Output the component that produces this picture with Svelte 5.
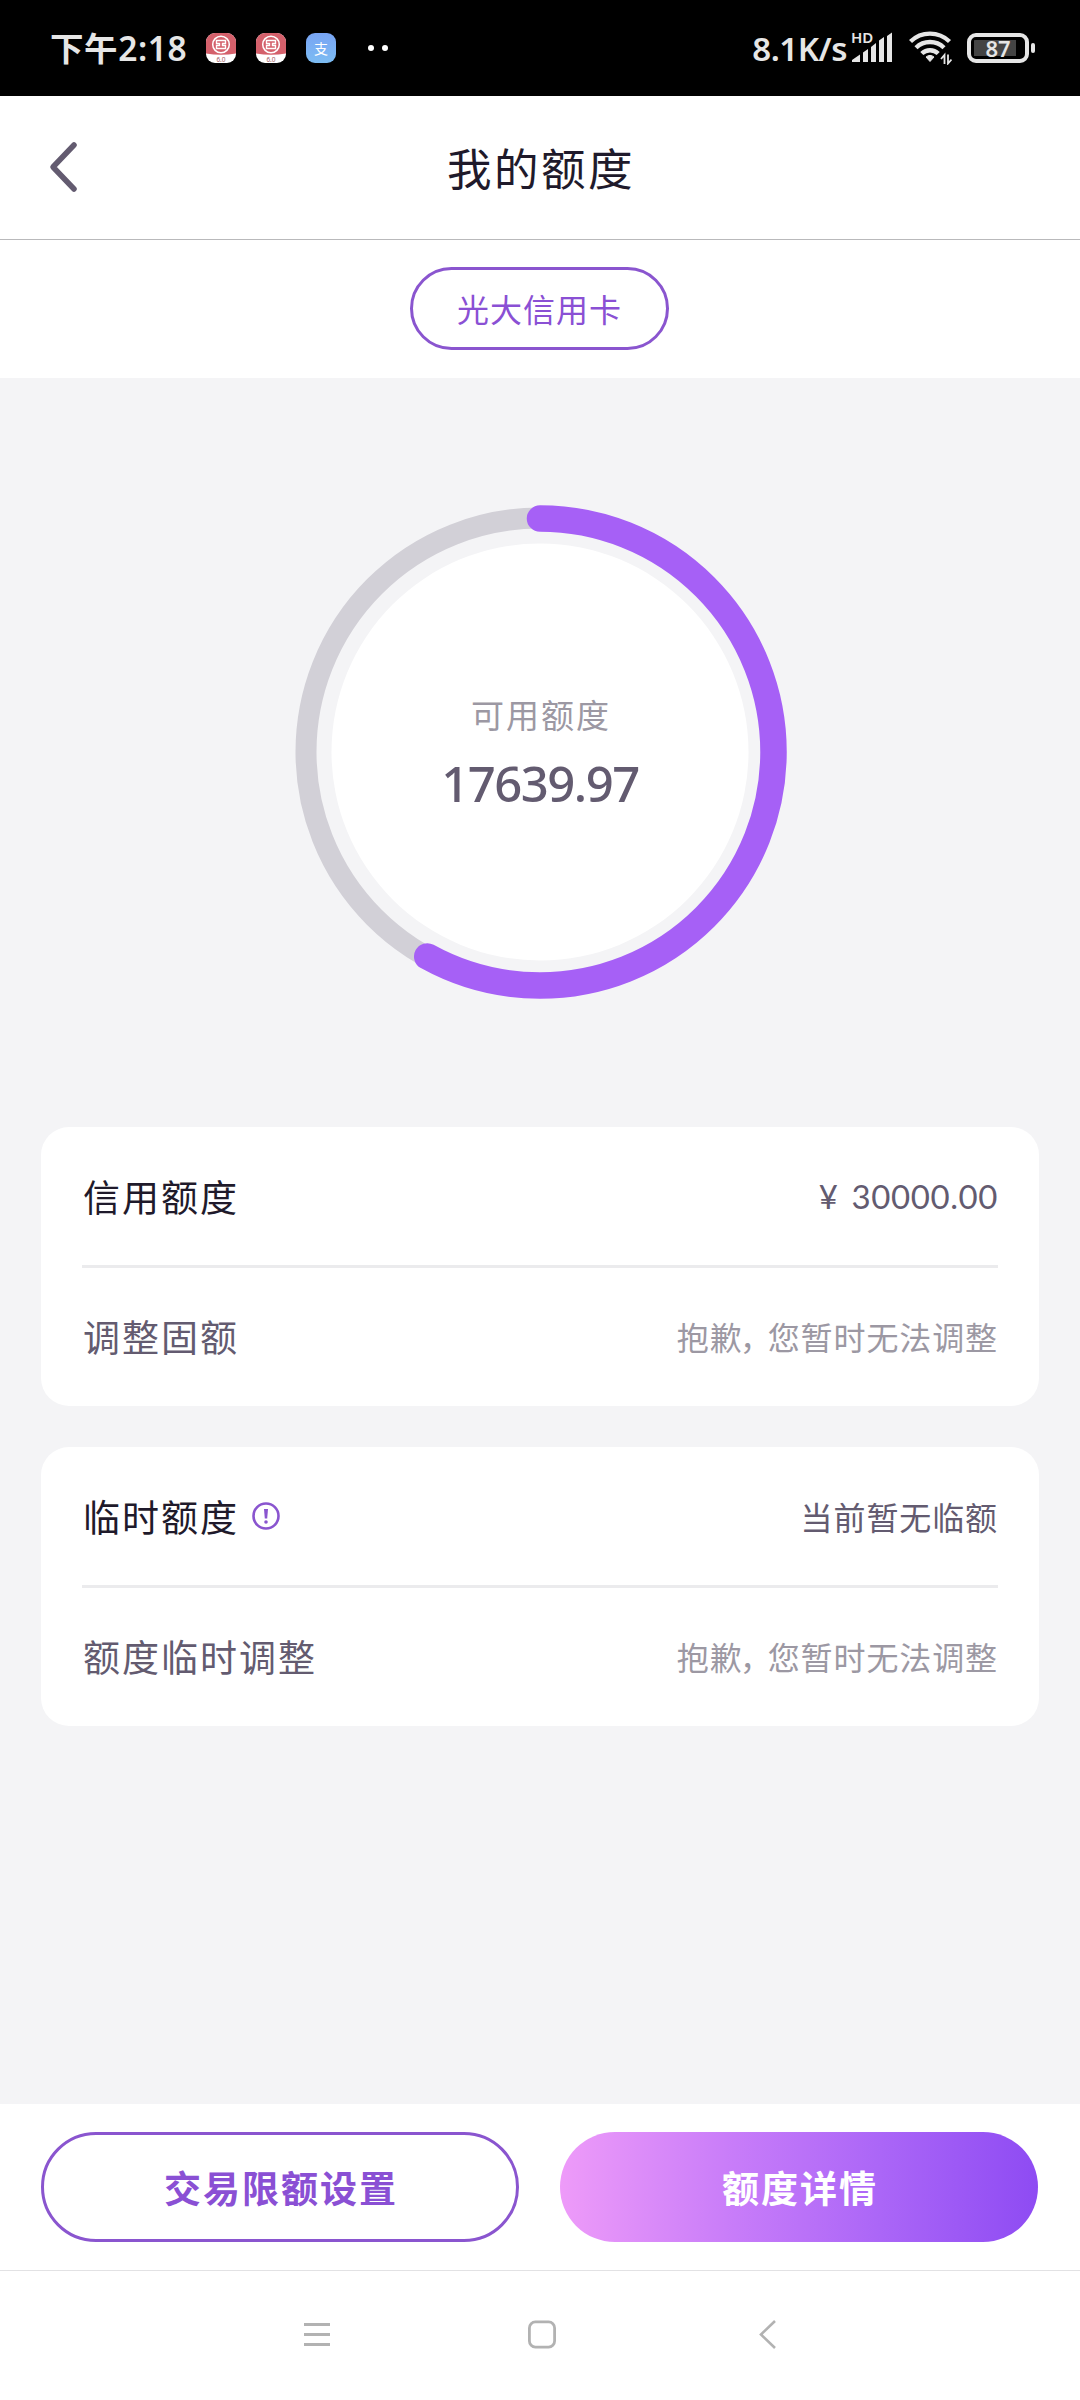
<script lang="ts">
  interface Row {
    label: string;
    value: string;
    primary?: boolean;
    info?: boolean;
    muted?: boolean;
  }

  const total = 30000;
  const available = 17639.97;
  const progress = 0.58;
  const radius = 233.5;
  const circumference = 2 * Math.PI * radius;

  const groups: Row[][] = [
    [
      { label: '信用额度', value: `¥ ${total.toFixed(2)}`, primary: true },
      { label: '调整固额', value: '抱歉，您暂时无法调整', muted: true },
    ],
    [
      { label: '临时额度', value: '当前暂无临额', primary: true, info: true },
      { label: '额度临时调整', value: '抱歉，您暂时无法调整', muted: true },
    ],
  ];
</script>

{#snippet bankIcon()}
  <svg class="app-icon" viewBox="0 0 30 30">
    <rect width="30" height="30" rx="9" fill="#fff" />
    <path d="M0 20.500V9a9 9 0 0 1 9-9h12a9 9 0 0 1 9 9v11.500Q15 23 0 20.500z" fill="#d4606b" />
    <circle cx="15" cy="11.500" r="8.300" fill="none" stroke="#fff" stroke-width="1.500" />
    <path
      d="M10.500 7.500h9v3h-3v2h3v3h-9v-3h3v-2h-3z"
      fill="none"
      stroke="#fff"
      stroke-width="1.400"
    />
    <text x="15" y="28.500" text-anchor="middle" font-size="6.500" fill="#a05a60">6.0</text>
  </svg>
{/snippet}

<div class="screen">
  <div class="status-bar">
    <span class="time">下午2:18</span>
    <div class="app-icons">
      {@render bankIcon()}
      {@render bankIcon()}
      <span class="app-icon pay">支</span>
    </div>
    <span class="dots"><i></i><i></i></span>
    <div class="status-right">
      <span class="speed">8.1K/s</span>
      <svg class="signal" width="43" height="56" viewBox="0 -10 43 56" fill="#e6e6e6">
        <text x="0" y="13" font-size="15" font-weight="600">HD</text>
        <path d="M1 32v-2l8-5.500v7.500zM12 22.500l5-3.500v13h-5zM20 17l5-4v19h-5zM28 10.500l5-3.500v25h-5zM36 6l5-3.500v29.500h-5z" />
      </svg>
      <svg class="wifi" width="43" height="34" viewBox="0 0 43 34">
        <g fill="none" stroke="#e6e6e6" stroke-width="4.400">
          <path d="M1.500 10.500a28 28 0 0 1 39 0" />
          <path d="M7 16.700a20 20 0 0 1 28 0" />
          <path d="M12.800 22.500a11.800 11.800 0 0 1 16.400 0" />
        </g>
        <path d="M17 26q4-3.200 8 0l-4 4.500z" fill="#e6e6e6" stroke="#e6e6e6" stroke-linejoin="round" />
        <path d="M35.500 33v-9l-3.500 4M39 23.500v9l3.500-4" fill="none" stroke="#e6e6e6" stroke-width="1.800" />
      </svg>
      <div class="battery"><span>87</span></div>
    </div>
  </div>

  <header>
    <svg class="back" width="32" height="54" viewBox="0 0 32 54">
      <path d="M27 5L6 27l21 22" fill="none" stroke="#635b70" stroke-width="5.500" stroke-linecap="round" stroke-linejoin="round" />
    </svg>
    <h1>我的额度</h1>
  </header>

  <div class="tabs">
    <button class="chip">光大信用卡</button>
  </div>

  <main>
    <div class="gauge">
      <svg width="494" height="494" viewBox="0 0 494 494" fill="none">
        <circle cx="247" cy="247" r="234" stroke="#d2d0d7" stroke-width="21" />
        <circle cx="247" cy="247" r="208.500" fill="#fff" />
        <circle
          cx="247"
          cy="247"
          r={radius}
          stroke="#a660f6"
          stroke-width="26.500"
          stroke-linecap="round"
          stroke-dasharray="{circumference * progress} {circumference}"
          transform="rotate(-90 247 247)"
        />
      </svg>
      <div class="gauge-text">
        <span class="gauge-label">可用额度</span>
        <span class="gauge-value">{available}</span>
      </div>
    </div>

    {#each groups as rows}
      <section class="card">
        {#each rows as row}
          <div class="row">
            <span class="label" class:primary={row.primary}>{row.label}</span>
            {#if row.info}
              <svg class="info" width="28" height="28" viewBox="0 0 28 28">
                <circle cx="14" cy="14" r="12.500" fill="none" stroke="#8a55cf" stroke-width="2.600" />
                <path d="M12 7h4l-.8 9.500h-2.400z" fill="#8a55cf" />
                <circle cx="14" cy="20" r="1.800" fill="#8a55cf" />
              </svg>
            {/if}
            <span class="value" class:muted={row.muted} class:amount={row.value.startsWith('¥')}>
              {#each row.value.split('，') as part, i}{#if i > 0}<span class="comma">，</span>{/if}{part}{/each}
            </span>
          </div>
        {/each}
      </section>
    {/each}
  </main>

  <footer>
    <button class="outline">交易限额设置</button>
    <button class="filled">额度详情</button>
  </footer>

  <nav>
    <svg width="30" height="30" viewBox="0 0 30 30" fill="none" stroke="#b2b2b2" stroke-width="2.800">
      <path d="M2 4.500h26M2 14.500h26M2 24.500h26" />
    </svg>
    <svg width="30" height="30" viewBox="0 0 30 30" fill="none" stroke="#b2b2b2" stroke-width="2.800">
      <rect x="2.400" y="1.900" width="25.200" height="25.200" rx="6" />
    </svg>
    <svg width="30" height="30" viewBox="0 0 30 30" fill="none" stroke="#b2b2b2" stroke-width="2.600">
      <path d="M23 1L9 14.500 23 28" />
    </svg>
  </nav>
</div>

<style>
  :global(body) {
    background: #fff;
  }

  .screen {
    display: flex;
    flex-direction: column;
    width: 1080px;
    height: 2400px;
    background: #f4f4f6;
    font-family: 'Noto Sans', 'Noto Sans CJK SC', sans-serif;
    overflow: hidden;
  }

  button {
    font-family: inherit;
    box-sizing: border-box;
    padding: 0;
    white-space: nowrap;
  }

  .status-bar {
    display: flex;
    align-items: center;
    height: 96px;
    box-sizing: border-box;
    padding: 0 45px 0 50px;
    background: #000;
    color: #e6e6e6;
    flex-shrink: 0;
  }

  .time {
    width: 156px;
    padding-bottom: 3px;
    font-size: 33.5px;
    font-weight: 600;
    letter-spacing: 0.6px;
    white-space: nowrap;
  }

  .app-icons {
    display: flex;
    gap: 20px;
  }

  .app-icon {
    width: 30px;
    height: 30px;
  }

  .pay {
    display: flex;
    align-items: center;
    justify-content: center;
    border-radius: 9px;
    background: linear-gradient(#78a4f4, #7cbcf2);
    color: #fff;
    font-size: 14px;
  }

  .dots {
    display: flex;
    gap: 8px;
    margin-left: 32px;
  }

  .dots i {
    width: 6px;
    height: 6px;
    border-radius: 50%;
    background: #fff;
  }

  .status-right {
    display: flex;
    align-items: center;
    margin-left: auto;
  }

  .speed {
    font-size: 33px;
    font-weight: 600;
    letter-spacing: -0.5px;
    margin-right: 4px;
  }

  .signal {
    margin-right: 15px;
  }

  .wifi {
    margin-right: 15px;
  }

  .battery {
    position: relative;
    width: 62px;
    height: 30px;
    box-sizing: border-box;
    border: 4px solid #e6e6e6;
    border-radius: 9px;
    display: flex;
    align-items: center;
    justify-content: center;
    margin-right: 6px;
    font-size: 22px;
    font-weight: 600;
    background: linear-gradient(90deg, transparent 3px, #444 3px 45px, transparent 45px) content-box;
    padding: 3px 0;
    line-height: 1;
  }

  .battery::after {
    content: '';
    position: absolute;
    right: -10px;
    top: 6px;
    width: 4px;
    height: 10px;
    border-radius: 2px;
    background: #e6e6e6;
  }

  header {
    display: grid;
    grid-template-columns: 120px 1fr 120px;
    align-items: center;
    height: 144px;
    box-sizing: border-box;
    padding-bottom: 2px;
    border-bottom: 1px solid #b9b9bb;
    background: #fff;
    flex-shrink: 0;
  }

  .back {
    margin-left: 47px;
  }

  h1 {
    margin: 0;
    text-align: center;
    color: #1f1a2b;
    font-size: 44.5px;
    font-weight: 400;
    letter-spacing: 2.5px;
    text-indent: 2px;
  }

  .tabs {
    display: flex;
    justify-content: center;
    align-items: center;
    height: 138px;
    box-sizing: border-box;
    padding: 0 1px 2px 0;
    background: #fff;
    flex-shrink: 0;
  }

  .chip {
    width: 259px;
    height: 83px;
    border: 3px solid #8a55cf;
    border-radius: 42px;
    background: none;
    color: #8a50d4;
    font-size: 32px;
    letter-spacing: 1px;
  }

  main {
    flex: 1;
    display: flex;
    flex-direction: column;
    padding: 127px 41px 0;
  }

  .gauge {
    display: grid;
    place-items: center;
    height: 494px;
    margin-bottom: 128px;
  }

  .gauge > * {
    grid-area: 1 / 1;
  }

  .gauge-text {
    display: flex;
    flex-direction: column;
    align-items: center;
    padding-top: 12px;
  }

  .gauge-label {
    color: #9c98a3;
    font-size: 33px;
    line-height: 50px;
    letter-spacing: 2px;
    text-indent: 2px;
  }

  .gauge-value {
    color: #635b70;
    font-size: 49px;
    font-weight: 500;
    line-height: 84px;
    letter-spacing: -1.5px;
  }

  .card {
    box-sizing: border-box;
    height: 279px;
    padding: 0 41px;
    margin-bottom: 41px;
    border-radius: 28px;
    background: #fff;
    display: grid;
    grid-template-rows: 138px 141px;
  }

  .row {
    display: flex;
    align-items: center;
  }

  .row + .row {
    padding-bottom: 3px;
    border-top: 3px solid #ebebed;
  }

  .label {
    margin-left: 1px;
    color: #635b70;
    font-size: 37px;
    letter-spacing: 2px;
  }

  .label.primary {
    color: #1f1a2b;
  }

  .info {
    margin-left: 13px;
  }

  .value {
    margin-left: auto;
    color: #635b70;
    font-size: 32px;
    letter-spacing: 0.9px;
  }

  .value.muted {
    color: #9c98a3;
  }

  .value.amount {
    font-family: Lato, 'Noto Sans CJK SC', sans-serif;
    font-size: 33px;
    letter-spacing: 0.6px;
    word-spacing: 4px;
  }

  .comma {
    margin-left: -3px;
    letter-spacing: -4px;
  }

  footer {
    display: grid;
    grid-template-columns: 1fr 1fr;
    gap: 41px;
    align-items: center;
    height: 166px;
    padding: 0 42px 0 41px;
    background: #fff;
    flex-shrink: 0;
  }

  footer button {
    height: 110px;
    border-radius: 55px;
    font-size: 37px;
    font-weight: 600;
    letter-spacing: 2px;
    text-indent: 2px;
  }

  .outline {
    border: 3px solid #8a55cf;
    background: #fff;
    color: #8a50d4;
  }

  .filled {
    border: none;
    background: linear-gradient(90deg, #ee9bf9, #c97df9 35%, #ab66f7 67%, #8e4bf3);
    color: #fff;
  }

  nav {
    display: flex;
    justify-content: center;
    gap: 195px;
    height: 130px;
    box-sizing: border-box;
    padding: 49px 0 0 3px;
    border-top: 1px solid #e2e2e4;
    background: #fff;
    flex-shrink: 0;
  }
</style>
